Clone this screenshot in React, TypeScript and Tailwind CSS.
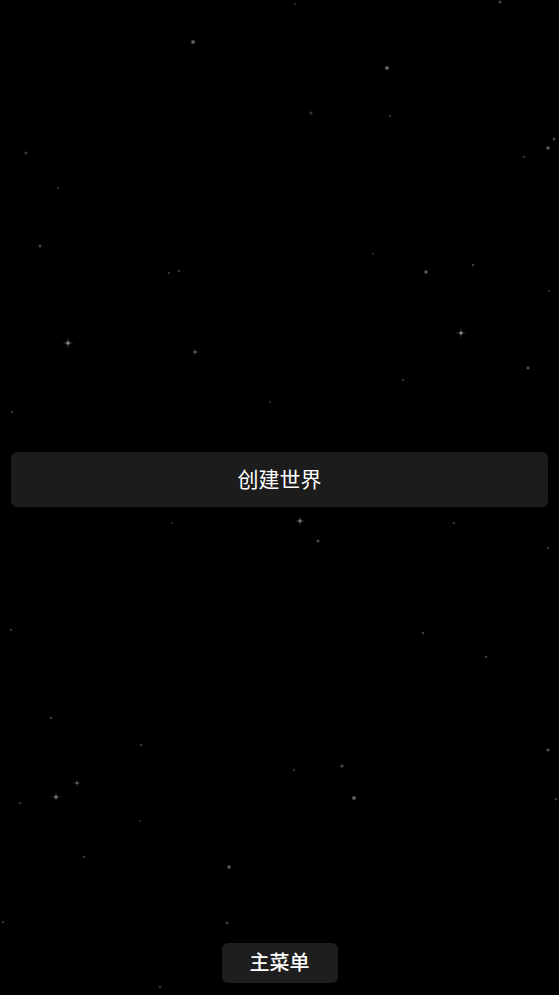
import React from "react";

type Star = { x: number; y: number; r: number; o: number; spark?: boolean };

// hand-placed to match the screenshot
const STARS: Star[] = [
  { x: 193, y: 42, r: 1.3, o: 0.5 },
  { x: 26, y: 153, r: 1, o: 0.3 },
  { x: 58, y: 188, r: 0.8, o: 0.25 },
  { x: 295, y: 4, r: 0.8, o: 0.25 },
  { x: 500, y: 2, r: 1, o: 0.35 },
  { x: 387, y: 68, r: 1.3, o: 0.5 },
  { x: 311, y: 113, r: 1, o: 0.3 },
  { x: 390, y: 116, r: 0.8, o: 0.3 },
  { x: 554, y: 139, r: 1, o: 0.35 },
  { x: 548, y: 148, r: 1.2, o: 0.45 },
  { x: 524, y: 157, r: 0.8, o: 0.3 },
  { x: 40, y: 246, r: 1, o: 0.35 },
  { x: 169, y: 273, r: 0.8, o: 0.3 },
  { x: 179, y: 271, r: 0.8, o: 0.3 },
  { x: 68, y: 343, r: 1.2, o: 0.55, spark: true },
  { x: 195, y: 352, r: 0.9, o: 0.4, spark: true },
  { x: 12, y: 412, r: 0.8, o: 0.3 },
  { x: 270, y: 402, r: 0.7, o: 0.25 },
  { x: 373, y: 254, r: 0.7, o: 0.25 },
  { x: 426, y: 272, r: 1.2, o: 0.45 },
  { x: 473, y: 265, r: 0.9, o: 0.35 },
  { x: 549, y: 291, r: 0.7, o: 0.25 },
  { x: 461, y: 333, r: 1.1, o: 0.55, spark: true },
  { x: 528, y: 368, r: 1, o: 0.4 },
  { x: 403, y: 380, r: 0.8, o: 0.3 },
  { x: 172, y: 523, r: 0.7, o: 0.25 },
  { x: 11, y: 630, r: 0.8, o: 0.3 },
  { x: 51, y: 718, r: 0.8, o: 0.35 },
  { x: 300, y: 521, r: 1.1, o: 0.5, spark: true },
  { x: 318, y: 541, r: 1, o: 0.4 },
  { x: 454, y: 523, r: 0.8, o: 0.3 },
  { x: 548, y: 548, r: 0.8, o: 0.3 },
  { x: 423, y: 633, r: 0.9, o: 0.35 },
  { x: 486, y: 657, r: 0.8, o: 0.35 },
  { x: 141, y: 745, r: 0.8, o: 0.3 },
  { x: 77, y: 783, r: 0.9, o: 0.4, spark: true },
  { x: 56, y: 797, r: 1.1, o: 0.5, spark: true },
  { x: 20, y: 803, r: 0.8, o: 0.3 },
  { x: 140, y: 821, r: 0.7, o: 0.25 },
  { x: 84, y: 857, r: 0.8, o: 0.3 },
  { x: 229, y: 867, r: 1.2, o: 0.45 },
  { x: 3, y: 922, r: 0.8, o: 0.3 },
  { x: 227, y: 923, r: 0.9, o: 0.35 },
  { x: 294, y: 770, r: 0.8, o: 0.3 },
  { x: 342, y: 766, r: 0.8, o: 0.35, spark: true },
  { x: 354, y: 798, r: 1.3, o: 0.5 },
  { x: 548, y: 750, r: 1, o: 0.4 },
  { x: 556, y: 799, r: 0.8, o: 0.3 },
  { x: 160, y: 987, r: 0.8, o: 0.3 },
];

function StarField() {
  return (
    <svg className="absolute inset-0 h-full w-full" viewBox="0 0 559 995" preserveAspectRatio="none">
      <defs>
        <radialGradient id="glow">
          <stop offset="0%" stopColor="#fff" stopOpacity="1" />
          <stop offset="100%" stopColor="#fff" stopOpacity="0" />
        </radialGradient>
        <linearGradient id="rayH" x1="0" x2="1" y1="0" y2="0">
          <stop offset="0%" stopColor="#fff" stopOpacity="0" />
          <stop offset="50%" stopColor="#fff" stopOpacity="1" />
          <stop offset="100%" stopColor="#fff" stopOpacity="0" />
        </linearGradient>
        <linearGradient id="rayV" x1="0" x2="0" y1="0" y2="1">
          <stop offset="0%" stopColor="#fff" stopOpacity="0" />
          <stop offset="50%" stopColor="#fff" stopOpacity="1" />
          <stop offset="100%" stopColor="#fff" stopOpacity="0" />
        </linearGradient>
      </defs>
      {STARS.map((s, i) => (
        <g key={i} opacity={s.o}>
          <circle cx={s.x} cy={s.y} r={s.r * 2.2} fill="url(#glow)" />
          <circle cx={s.x} cy={s.y} r={s.r * 0.6} fill="#fff" />
          {s.spark && (
            <>
              <rect x={s.x - s.r * 5} y={s.y - 0.4} width={s.r * 10} height={0.8} fill="url(#rayH)" />
              <rect x={s.x - 0.4} y={s.y - s.r * 5} width={0.8} height={s.r * 10} fill="url(#rayV)" />
            </>
          )}
        </g>
      ))}
    </svg>
  );
}

export default function App() {
  return (
    <div
      className="relative flex h-[995px] w-full flex-col overflow-hidden bg-black text-white"
      style={{ fontFamily: '"Noto Sans", "Noto Sans CJK SC", sans-serif' }}
    >
      <StarField />

      <main className="relative flex flex-1 items-center px-[11px] pt-4">
        <button className="h-[55px] w-full rounded-md bg-[#1c1c1c] text-[21px] text-white">
          创建世界
        </button>
      </main>

      <footer className="relative flex justify-center pb-3">
        <button className="h-10 rounded-md bg-[#1e1e1e] px-7 text-[20px] font-medium text-white">
          主菜单
        </button>
      </footer>
    </div>
  );
}
